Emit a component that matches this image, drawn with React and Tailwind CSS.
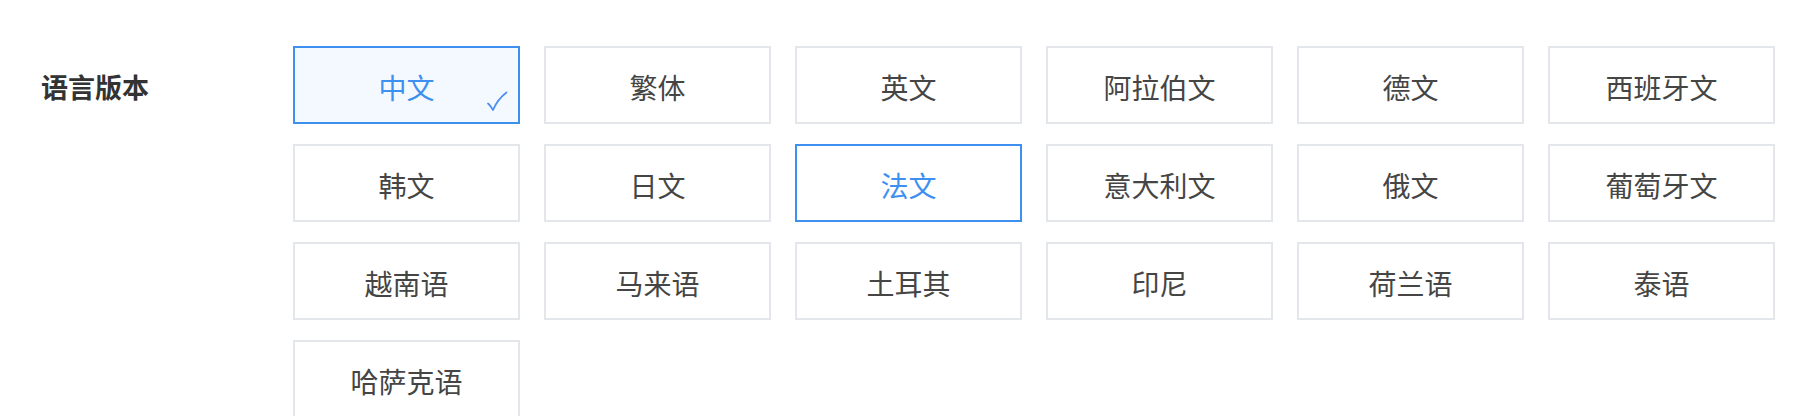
import { useState } from "react";

const languages = [
  "中文", "繁体", "英文", "阿拉伯文", "德文", "西班牙文",
  "韩文", "日文", "法文", "意大利文", "俄文", "葡萄牙文",
  "越南语", "马来语", "土耳其", "印尼", "荷兰语", "泰语",
  "哈萨克语",
];

const CheckMark = () => (
  <svg
    className="absolute right-[10px] bottom-[10px] w-[22px] h-[21px]"
    viewBox="0 0 22 21"
    fill="none"
  >
    <path
      d="M2 12.5 C4 14 5.5 16.5 7 19 C10 12 14.5 6 20.5 1.5"
      stroke="#4d8ff0"
      strokeWidth="1.8"
      strokeLinecap="round"
      strokeLinejoin="round"
    />
  </svg>
);

const App = () => {
  const [selected, setSelected] = useState("中文");
  const focused = "法文";

  return (
    <div
      className="w-[1802px] h-[416px] bg-white overflow-hidden flex pt-[46px]"
      style={{ fontFamily: '"Noto Sans CJK SC", "Noto Sans", sans-serif' }}
    >
      <div className="w-[293px] shrink-0 pl-[41px] h-[78px] flex items-center">
        <span className="text-[27px] font-bold text-[#333333] leading-none mt-[2px]">
          语言版本
        </span>
      </div>

      <div className="grid grid-cols-[repeat(6,227px)] auto-rows-[78px] gap-x-[24px] gap-y-[20px]">
        {languages.map((lang) => {
          const isSelected = lang === selected;
          const isFocused = lang === focused;
          let cls = "border-[#e3e6eb] bg-white text-[#454545]";
          if (isSelected) cls = "border-[#3d8ff0] bg-[#f4f9ff] text-[#3d8ff0]";
          else if (isFocused) cls = "border-[#3d8ff0] bg-white text-[#3d8ff0]";
          return (
            <button
              key={lang}
              onClick={() => setSelected(lang)}
              className={`relative flex items-center justify-center border-2 text-[28px] leading-none ${cls}`}
            >
              <span className="mt-[3px]">{lang}</span>
              {isSelected && <CheckMark />}
            </button>
          );
        })}
      </div>
    </div>
  );
};

export default App;
